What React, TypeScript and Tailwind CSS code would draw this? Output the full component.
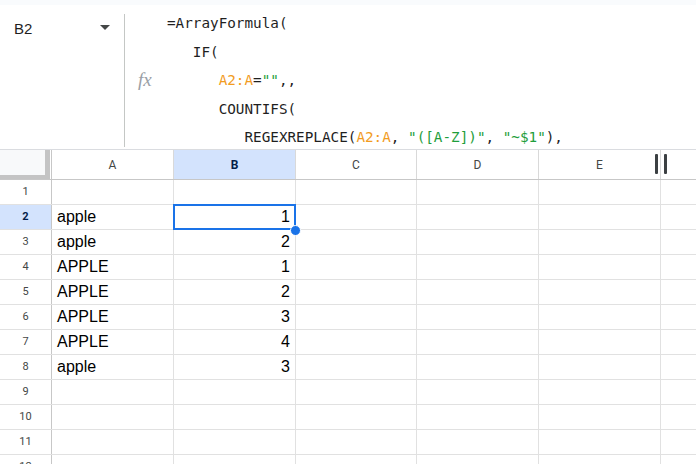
const COLS = [
  { label: 'A', w: 'w-[122px]' },
  { label: 'B', w: 'w-[122px]' },
  { label: 'C', w: 'w-[121px]' },
  { label: 'D', w: 'w-[122px]' },
  { label: 'E', w: 'w-[122px]' },
];

const rows: { n: number; a?: string; b?: string }[] = [
  { n: 1 },
  { n: 2, a: 'apple', b: '1' },
  { n: 3, a: 'apple', b: '2' },
  { n: 4, a: 'APPLE', b: '1' },
  { n: 5, a: 'APPLE', b: '2' },
  { n: 6, a: 'APPLE', b: '3' },
  { n: 7, a: 'APPLE', b: '4' },
  { n: 8, a: 'apple', b: '3' },
  { n: 9 },
  { n: 10 },
  { n: 11 },
  { n: 12 },
];

const Orange = ({ children }: { children: React.ReactNode }) => <span className="text-[#f29c1f]">{children}</span>;
const Green = ({ children }: { children: React.ReactNode }) => <span className="text-[#1f9e3c]">{children}</span>;

function FormulaBar() {
  return (
    <div className="flex h-[145px] border-b border-[#dadce0] bg-white overflow-hidden">
      <div className="w-[124px] shrink-0 flex items-start justify-between pl-[14px] pr-[14px] pt-[13px]">
        <span className="text-[15px] text-[#1f1f1f] font-['Liberation_Sans',Arial,sans-serif]">B2</span>
        <svg width="10" height="6" viewBox="0 0 10 6" className="mt-[7px]">
          <path d="M0 0 L10 0 L5 5 Z" fill="#444746" />
        </svg>
      </div>
      <div className="w-px bg-[#c4c7c5] mt-[9px] mb-[2px]" />
      <div className="w-[42px] shrink-0 flex items-start justify-start pl-[13px] pt-[61px]">
        <span className="italic text-[19px] text-[#9aa0a6] font-['Liberation_Serif',serif] tracking-[0px]">fx</span>
      </div>
      <pre className="pt-[4px] text-[14.3px] leading-[28.5px] text-[#1f1f1f] font-['DejaVu_Sans_Mono',monospace]">
        {'=ArrayFormula(\n'}
        {'   IF(\n'}
        {'      '}<Orange>A2:A</Orange>{'='}<Green>""</Green>{',,\n'}
        {'      COUNTIFS(\n'}
        {'         REGEXREPLACE('}<Orange>A2:A</Orange>{', '}<Green>"([A-Z])"</Green>{', '}<Green>"~$1"</Green>{'),'}
      </pre>
    </div>
  );
}

export default function App() {
  return (
    <div className="w-[696px] h-[464px] overflow-hidden bg-white font-['Liberation_Sans',Arial,sans-serif]">
      <div className="h-[5px] bg-[#f9fbfd]" />
      <FormulaBar />
      {/* column header */}
      <div className="flex h-[30px] border-b border-[#c7c7c7] font-['Roboto',sans-serif] text-[12px] text-[#444746]">
        <div className="w-[52px] shrink-0 border-r border-[#c7c7c7]">
          <div className="w-[50px] h-[29px] bg-[#f8f9fa] border-r-[5px] border-b-[4px] border-[#c4c4c4]" />
        </div>
        {COLS.map((c) => (
          <div
            key={c.label}
            className={`${c.w} shrink-0 border-r border-[#d9d9d9] flex items-center justify-center relative ${
              c.label === 'B' ? 'bg-[#d3e3fd] font-bold text-[#041e49]' : ''
            }`}
          >
            {c.label}
            {c.label === 'E' && (
              <div className="absolute right-[-7px] top-[4px] flex gap-[6px]">
                <div className="w-[3px] h-[20px] bg-[#3c4043] rounded-[1px]" />
                <div className="w-[3px] h-[20px] bg-[#3c4043] rounded-[1px]" />
              </div>
            )}
          </div>
        ))}
        <div className="flex-1" />
      </div>
      {/* rows */}
      {rows.map((r) => (
        <div
          key={r.n}
          className={`flex h-[25px] border-b border-[#e1e1e1] text-[16px] text-black relative ${r.n === 2 ? 'z-10' : ''}`}
        >
          <div
            className={`w-[52px] shrink-0 border-r border-[#c7c7c7] flex items-center justify-center font-['Roboto',sans-serif] text-[11px] ${
              r.n === 2 ? 'bg-[#d3e3fd] font-bold text-[#041e49]' : 'text-[#444746]'
            }`}
          >
            {r.n}
          </div>
          <div className="w-[122px] shrink-0 border-r border-[#e1e1e1] flex items-center pl-[5px]">{r.a}</div>
          <div className="w-[122px] shrink-0 border-r border-[#e1e1e1] flex items-center justify-end pr-[5px] relative">
            {r.b}
            {r.n === 2 && (
              <>
                <div className="absolute left-[-1px] top-[-1px] right-[-1px] bottom-[-1px] border-2 border-[#1a73e8]" />
                <div className="absolute right-[-6px] bottom-[-7px] w-[11px] h-[11px] rounded-full bg-[#1a73e8] border border-white" />
              </>
            )}
          </div>
          <div className="w-[121px] shrink-0 border-r border-[#e1e1e1]" />
          <div className="w-[122px] shrink-0 border-r border-[#e1e1e1]" />
          <div className="w-[122px] shrink-0 border-r border-[#e1e1e1]" />
          <div className="flex-1" />
        </div>
      ))}
    </div>
  );
}
